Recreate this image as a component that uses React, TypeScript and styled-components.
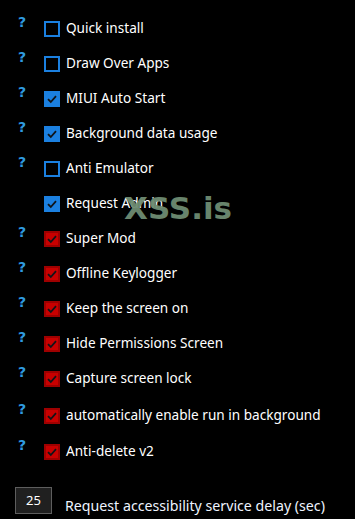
import React from 'react';
import styled, { createGlobalStyle } from 'styled-components';

const GlobalStyle = createGlobalStyle`
  html, body {
    margin: 0;
    padding: 0;
    background: #000;
  }
  body {
    font-family: 'Noto Sans', 'Open Sans', sans-serif;
    color: #fff;
  }
`;

const Page = styled.div`
  position: relative;
  width: 355px;
  height: 519px;
  background: #000;
  overflow: hidden;
  box-sizing: border-box;
  padding: 16px 0 0 18px;
`;

const List = styled.div`
  display: flex;
  flex-direction: column;
`;

const Row = styled.div<{ $gap: number }>`
  display: flex;
  align-items: flex-start;
  height: ${({ $gap }) => $gap}px;
`;

const Help = styled.span<{ $hidden?: boolean }>`
  width: 26px;
  margin-top: -1px;
  font-family: 'DejaVu Sans', sans-serif;
  font-weight: bold;
  font-size: 14px;
  line-height: 14px;
  color: #2f9be0;
  visibility: ${({ $hidden }) => ($hidden ? 'hidden' : 'visible')};
`;

const Box = styled.span<{ $checked: boolean; $tone: 'blue' | 'red' }>`
  margin-top: 5px;
  width: 16px;
  height: 16px;
  box-sizing: border-box;
  border: 2px solid ${({ $tone }) => ($tone === 'red' ? '#9e0000' : '#1b80e0')};
  background: ${({ $checked, $tone }) =>
    !$checked ? '#000' : $tone === 'red' ? '#c80000' : '#1b80e0'};
  display: flex;
  align-items: center;
  justify-content: center;
  flex-shrink: 0;
`;

const Label = styled.span`
  margin-left: 6px;
  margin-top: 3px;
  font-size: 13.6px;
  line-height: 18px;
  color: #fff;
  white-space: nowrap;
`;

const Footer = styled.div`
  display: flex;
  align-items: flex-end;
  gap: 13px;
  margin: 13px 0 0 -3px;
`;

const DelayInput = styled.div`
  width: 37px;
  height: 27px;
  box-sizing: border-box;
  background: #202020;
  border: 1px solid #5e5e5e;
  font-size: 13px;
  line-height: 24px;
  padding-left: 10px;
  color: #fff;
`;

const DelayLabel = styled.span`
  font-size: 14.2px;
  line-height: 18px;
  color: #eef4ff;
  margin-bottom: -1px;
  white-space: nowrap;
`;

const Watermark = styled.div`
  position: absolute;
  left: 124px;
  top: 190px;
  font-family: 'DejaVu Sans', sans-serif;
  font-weight: bold;
  font-size: 31px;
  color: #6e8c72;
  opacity: 0.95;
  pointer-events: none;
`;

const Check = () => (
  <svg width="12" height="12" viewBox="0 0 12 12">
    <path d="M2 6.2 L4.8 9 L10 3.2" fill="none" stroke="#101418" strokeWidth="1.8" />
  </svg>
);

type Item = { label: string; checked: boolean; tone: 'blue' | 'red'; help?: boolean; gap: number };

const items: Item[] = [
  { label: 'Quick install', checked: false, tone: 'blue', gap: 35 },
  { label: 'Draw Over Apps', checked: false, tone: 'blue', gap: 35 },
  { label: 'MIUI Auto Start', checked: true, tone: 'blue', gap: 35 },
  { label: 'Background data usage', checked: true, tone: 'blue', gap: 35 },
  { label: 'Anti Emulator', checked: false, tone: 'blue', gap: 35 },
  { label: 'Request Admin', checked: true, tone: 'blue', help: false, gap: 35 },
  { label: 'Super Mod', checked: true, tone: 'red', gap: 35 },
  { label: 'Offline Keylogger', checked: true, tone: 'red', gap: 35 },
  { label: 'Keep the screen on', checked: true, tone: 'red', gap: 35 },
  { label: 'Hide Permissions Screen', checked: true, tone: 'red', gap: 35 },
  { label: 'Capture screen lock', checked: true, tone: 'red', gap: 37 },
  { label: 'automatically enable run in background', checked: true, tone: 'red', gap: 36 },
  { label: 'Anti-delete v2', checked: true, tone: 'red', gap: 35 },
];

export default function App() {
  return (
    <>
      <GlobalStyle />
      <Page>
        <List>
          {items.map((it) => (
            <Row key={it.label} $gap={it.gap}>
              <Help $hidden={it.help === false}>?</Help>
              <Box $checked={it.checked} $tone={it.tone}>
                {it.checked && <Check />}
              </Box>
              <Label>{it.label}</Label>
            </Row>
          ))}
        </List>
        <Footer>
          <DelayInput>25</DelayInput>
          <DelayLabel>Request accessibility service delay (sec)</DelayLabel>
        </Footer>
        <Watermark>XSS.is</Watermark>
      </Page>
    </>
  );
}
